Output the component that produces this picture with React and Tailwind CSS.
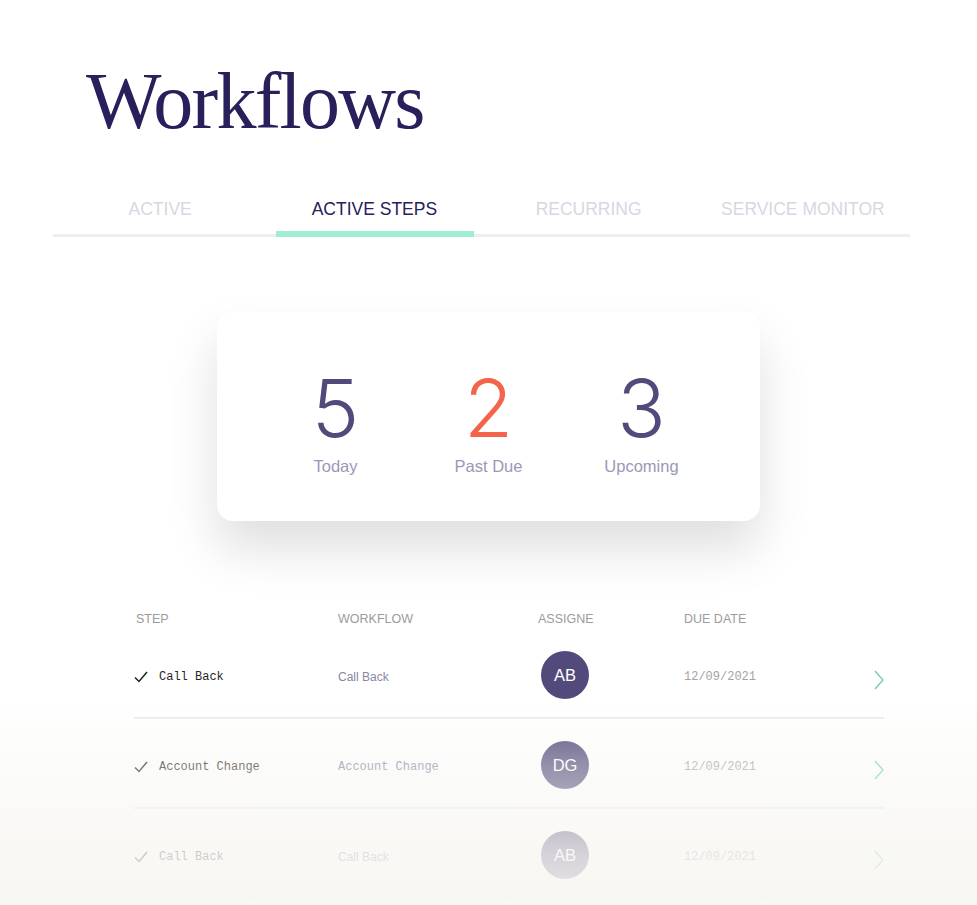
import { useState } from 'react';

const tabs = ['Active', 'Active Steps', 'Recurring', 'Service Monitor'];

const stats = [
  { value: 5, label: 'Today', color: 'text-[#524a7a]' },
  { value: 2, label: 'Past Due', color: 'text-[#f4644a]' },
  { value: 3, label: 'Upcoming', color: 'text-[#524a7a]' },
];

const rows = [
  { step: 'Call Back', workflow: 'Call Back', monoWorkflow: false, initials: 'AB', date: '12/09/2021' },
  { step: 'Account Change', workflow: 'Account Change', monoWorkflow: true, initials: 'DG', date: '12/09/2021' },
  { step: 'Call Back', workflow: 'Call Back', monoWorkflow: false, initials: 'AB', date: '12/09/2021' },
];

const sans = "font-['Liberation_Sans',Arial,sans-serif]";
const mono = "font-['Liberation_Mono','DejaVu_Sans_Mono',monospace]";

export default function App() {
  const [activeTab, setActiveTab] = useState(1);

  return (
    <div className="relative w-[977px] h-[905px] overflow-hidden bg-white">
      {/* header */}
      <h1 className="pl-[86px] pt-[55px] font-['Liberation_Serif','Times_New_Roman',serif] text-[80px] leading-[92px] tracking-[-0.022em] text-[#27205a]">
        Workflows
      </h1>

      {/* tabs */}
      <div className="ml-[53px] mt-[50px] flex w-[857px] border-b-[3px] border-[#eeeef1]">
        {tabs.map((tab, i) => (
          <button
            key={tab}
            onClick={() => setActiveTab(i)}
            className={`${sans} relative flex-1 pb-[13px] text-center text-[17.5px] uppercase leading-[24px] ${
              i === activeTab ? 'text-[#27205a]' : 'text-[#d8d7e2]'
            }`}
          >
            {tab}
            {i === activeTab && (
              <span className="absolute left-[9px] right-[8px] bottom-[-3px] h-[6px] bg-[#a0edd1]" />
            )}
          </button>
        ))}
      </div>

      {/* summary card */}
      <div className="ml-[217px] mt-[75px] flex h-[209px] w-[543px] items-center justify-center rounded-[16px] bg-white shadow-[0_28px_50px_rgba(0,0,0,0.13)]">
        <div className="mt-[10px] flex">
          {stats.map((s) => (
            <div key={s.label} className="flex w-[153px] flex-col items-center">
              <span className={`font-['Inter',sans-serif] text-[80px] font-light leading-[82px] ${s.color}`}>
                {s.value}
              </span>
              <span className={`${sans} mt-[6px] text-[16.5px] leading-[22px] text-[#9c98b6]`}>{s.label}</span>
            </div>
          ))}
        </div>
      </div>

      {/* table */}
      <div className="ml-[134px] mt-[90px] w-[750px]">
        <div className={`${sans} grid grid-cols-[204px_200px_146px_1fr] pl-[2px] text-[12.5px] uppercase leading-[16px] text-[#9b9b9b]`}>
          <span>Step</span>
          <span className="-ml-[2px]">Workflow</span>
          <span className="-ml-[2px]">Assigne</span>
          <span className="-ml-[2px]">Due Date</span>
        </div>
        <div className="mt-[2px]">
          {rows.map((r, i) => (
            <div
              key={i}
              className="grid h-[90px] grid-cols-[204px_200px_146px_1fr_auto] items-center border-b-2 border-[#ececef] pt-[8px]"
            >
              <div className="flex items-center gap-[11px] text-[#1f1f1f]">
                <svg width="14" height="12" viewBox="0 0 14 12" fill="none">
                  <path d="M1 6.5 L5 10.5 L13 1" stroke="currentColor" strokeWidth="1.5" />
                </svg>
                <span className={`${mono} text-[12px]`}>{r.step}</span>
              </div>
              <span className={`${r.monoWorkflow ? mono : sans} text-[12px] text-[#8a86a0]`}>{r.workflow}</span>
              <div className="pl-[3px]">
                <div className={`${sans} -mt-[4px] flex h-[48px] w-[48px] items-center justify-center rounded-full bg-[#524a7a] text-[16.5px] text-white`}>
                  {r.initials}
                </div>
              </div>
              <span className={`${mono} text-[12px] text-[#a3a3a3]`}>{r.date}</span>
              <svg width="12" height="20" viewBox="0 0 12 20" fill="none" className="mr-[-1px] mt-[6px]">
                <path d="M2 1 L10 10 L2 19" stroke="#67c9b6" strokeWidth="1.2" />
              </svg>
            </div>
          ))}
        </div>
      </div>

      {/* bottom fade overlay */}
      <div className="pointer-events-none absolute inset-x-0 top-[700px] bottom-0 bg-[linear-gradient(to_bottom,rgba(247,246,242,0)_0%,rgba(247,246,242,0.42)_33%,rgba(247,246,242,0.8)_76%,rgba(247,246,242,0.92)_100%)]" />
    </div>
  );
}
